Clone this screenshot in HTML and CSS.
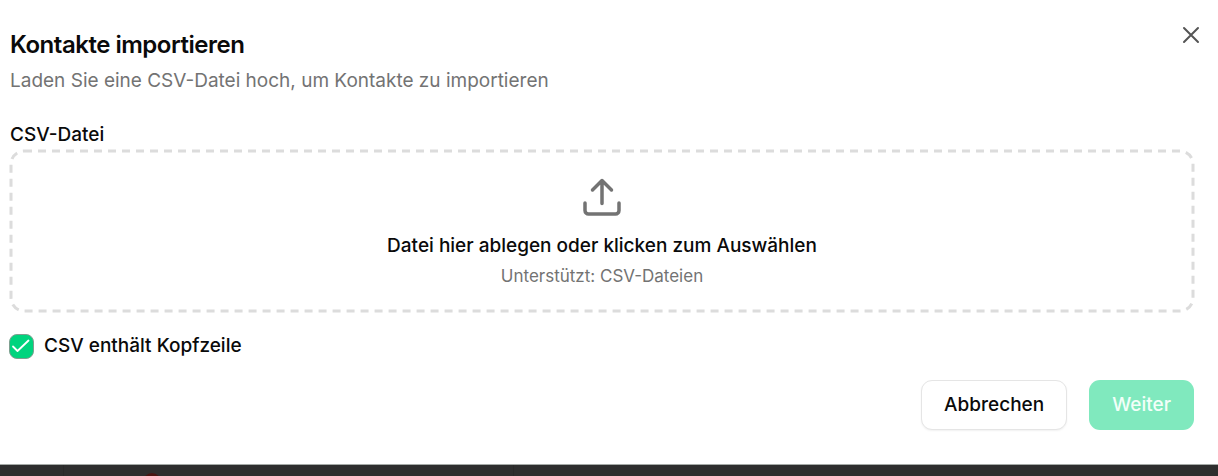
FILE: index.html
```html
<!DOCTYPE html>
<html lang="de">
<head>
  <meta charset="utf-8">
  <title>Kontakte importieren</title>
  <link rel="stylesheet" href="styles.css">
</head>
<body>

<form class="dialog" role="dialog" aria-labelledby="dialogTitle">
  <div class="dialog-header">
    <div>
      <h2 id="dialogTitle">Kontakte importieren</h2>
      <p class="description">Laden Sie eine CSV-Datei hoch, um Kontakte zu importieren</p>
    </div>
    <button type="button" class="close" aria-label="Schließen">
      <svg width="18" height="18" viewBox="0 0 18 18" fill="none" stroke="currentColor" stroke-width="2" stroke-linecap="round">
        <path d="M2 2l14 14M16 2L2 16"/>
      </svg>
    </button>
  </div>

  <label class="field-label" for="csvFile">CSV-Datei</label>
  <label class="dropzone" for="csvFile">
    <svg class="dropzone-border" aria-hidden="true">
      <rect width="100%" height="100%" rx="13"/>
    </svg>
    <input type="file" id="csvFile" class="file-input" accept=".csv">
    <svg width="40" height="40" viewBox="0 0 40 40" fill="none" stroke="#737373" stroke-width="3.5" stroke-linecap="round" stroke-linejoin="round">
      <path d="M20 26.5V3.500M10.500 13L20 3.500l9.500 9.500"/>
      <path d="M3 26v7.500a3.500 3.500 0 0 0 3.500 3.500h27a3.500 3.500 0 0 0 3.500-3.500V26"/>
    </svg>
    <span class="dropzone-title">Datei hier ablegen oder klicken zum Auswählen</span>
    <span class="dropzone-hint">Unterstützt: CSV-Dateien</span>
  </label>

  <div class="check">
    <input type="checkbox" id="hasHeader" checked>
    <label for="hasHeader">CSV enthält Kopfzeile</label>
    <svg class="check-mark" width="24" height="24" viewBox="0 0 24 24" fill="none" stroke="#fff" stroke-width="1.8" stroke-linecap="round" stroke-linejoin="round" aria-hidden="true">
      <path d="M4 13.500l4.500 4.500L19.500 7.500"/>
    </svg>
  </div>

  <div class="dialog-footer">
    <button type="button" class="btn btn-outline">Abbrechen</button>
    <button type="submit" class="btn btn-primary" disabled>Weiter</button>
  </div>
</form>

<div class="backdrop">
  <div class="backdrop-side"></div>
  <div class="backdrop-main"><span class="dot"></span></div>
</div>

</body>
</html>
```

FILE: styles.css
```css
* {
  box-sizing: border-box;
}
body {
  margin: 0;
  min-height: 100vh;
  display: flex;
  flex-direction: column;
  overflow: hidden;
  background: #2e2e2e;
  font-family: Inter, sans-serif;
  font-size: 19px;
  color: #0a0a0a;
}
button {
  font: inherit;
}
.dialog {
  padding: 24px 24px 34px 10px;
  background: #fff;
  border-bottom: 1px solid #a5aaa7;
}
.dialog-header {
  display: flex;
  justify-content: space-between;
  align-items: flex-start;
  margin-bottom: 28px;
}
h2 {
  margin: 7px 0 8px;
  font-size: 24px;
  line-height: 28px;
  font-weight: 600;
  letter-spacing: -0.02em;
}
.description {
  margin: 0;
  line-height: 28px;
  color: #737373;
}
.close {
  display: flex;
  margin-right: -8px;
  padding: 2px;
  border: 0;
  background: none;
  color: #555;
}
.field-label {
  display: block;
  line-height: 24px;
  margin-bottom: 3px;
  font-weight: 500;
}
.dropzone {
  position: relative;
  display: flex;
  flex-direction: column;
  align-items: center;
  padding: 27px 24px 22px;
}
.dropzone-border {
  position: absolute;
  inset: 1px;
  width: calc(100% - 2px);
  height: calc(100% - 2px);
  overflow: visible;
}
.dropzone-border rect {
  fill: none;
  stroke: #dcdcdc;
  stroke-width: 3;
  stroke-dasharray: 8 6;
}
.file-input {
  position: absolute;
  inset: 0;
  width: 100%;
  opacity: 0;
}
.dropzone-title {
  margin-top: 13px;
  line-height: 32px;
  font-weight: 500;
}
.dropzone-hint {
  line-height: 28px;
  font-size: 17px;
  color: #737373;
}
.check {
  position: relative;
  display: flex;
  align-items: center;
  gap: 10px;
  margin: 20px 0;
  line-height: 28px;
  font-weight: 500;
}
.check input {
  appearance: none;
  width: 25px;
  height: 25px;
  margin: 0 0 0 -1px;
  border: 1px solid #7f9f90;
  border-radius: 8px;
  background: #00d47e;
}
.check-mark {
  position: absolute;
  left: -1px;
  top: 1px;
  pointer-events: none;
}
.check input:not(:checked) {
  background: #fff;
}
.dialog-footer {
  display: flex;
  justify-content: flex-end;
  gap: 22px;
}
.btn {
  padding: 10px 22px;
  border: 1px solid transparent;
  border-radius: 11px;
  line-height: 28px;
  font-weight: 500;
}
.btn-outline {
  border-color: #e5e5e5;
  background: #fff;
  color: #0a0a0a;
  box-shadow: 0 1px 2px rgba(0, 0, 0, 0.06);
}
.btn-primary {
  background: #80e9be;
  color: #f2fff9;
}
.backdrop {
  flex: 1;
  display: flex;
  height: 10px;
  overflow: hidden;
}
.backdrop-side {
  width: 64px;
  border-right: 1px solid #292929;
}
.backdrop-main {
  width: 450px;
  padding: 8px 0 0 79px;
  border-right: 1px solid #292929;
}
.dot {
  display: block;
  width: 18px;
  height: 18px;
  border-radius: 50%;
  background: #4a1512;
}
```
